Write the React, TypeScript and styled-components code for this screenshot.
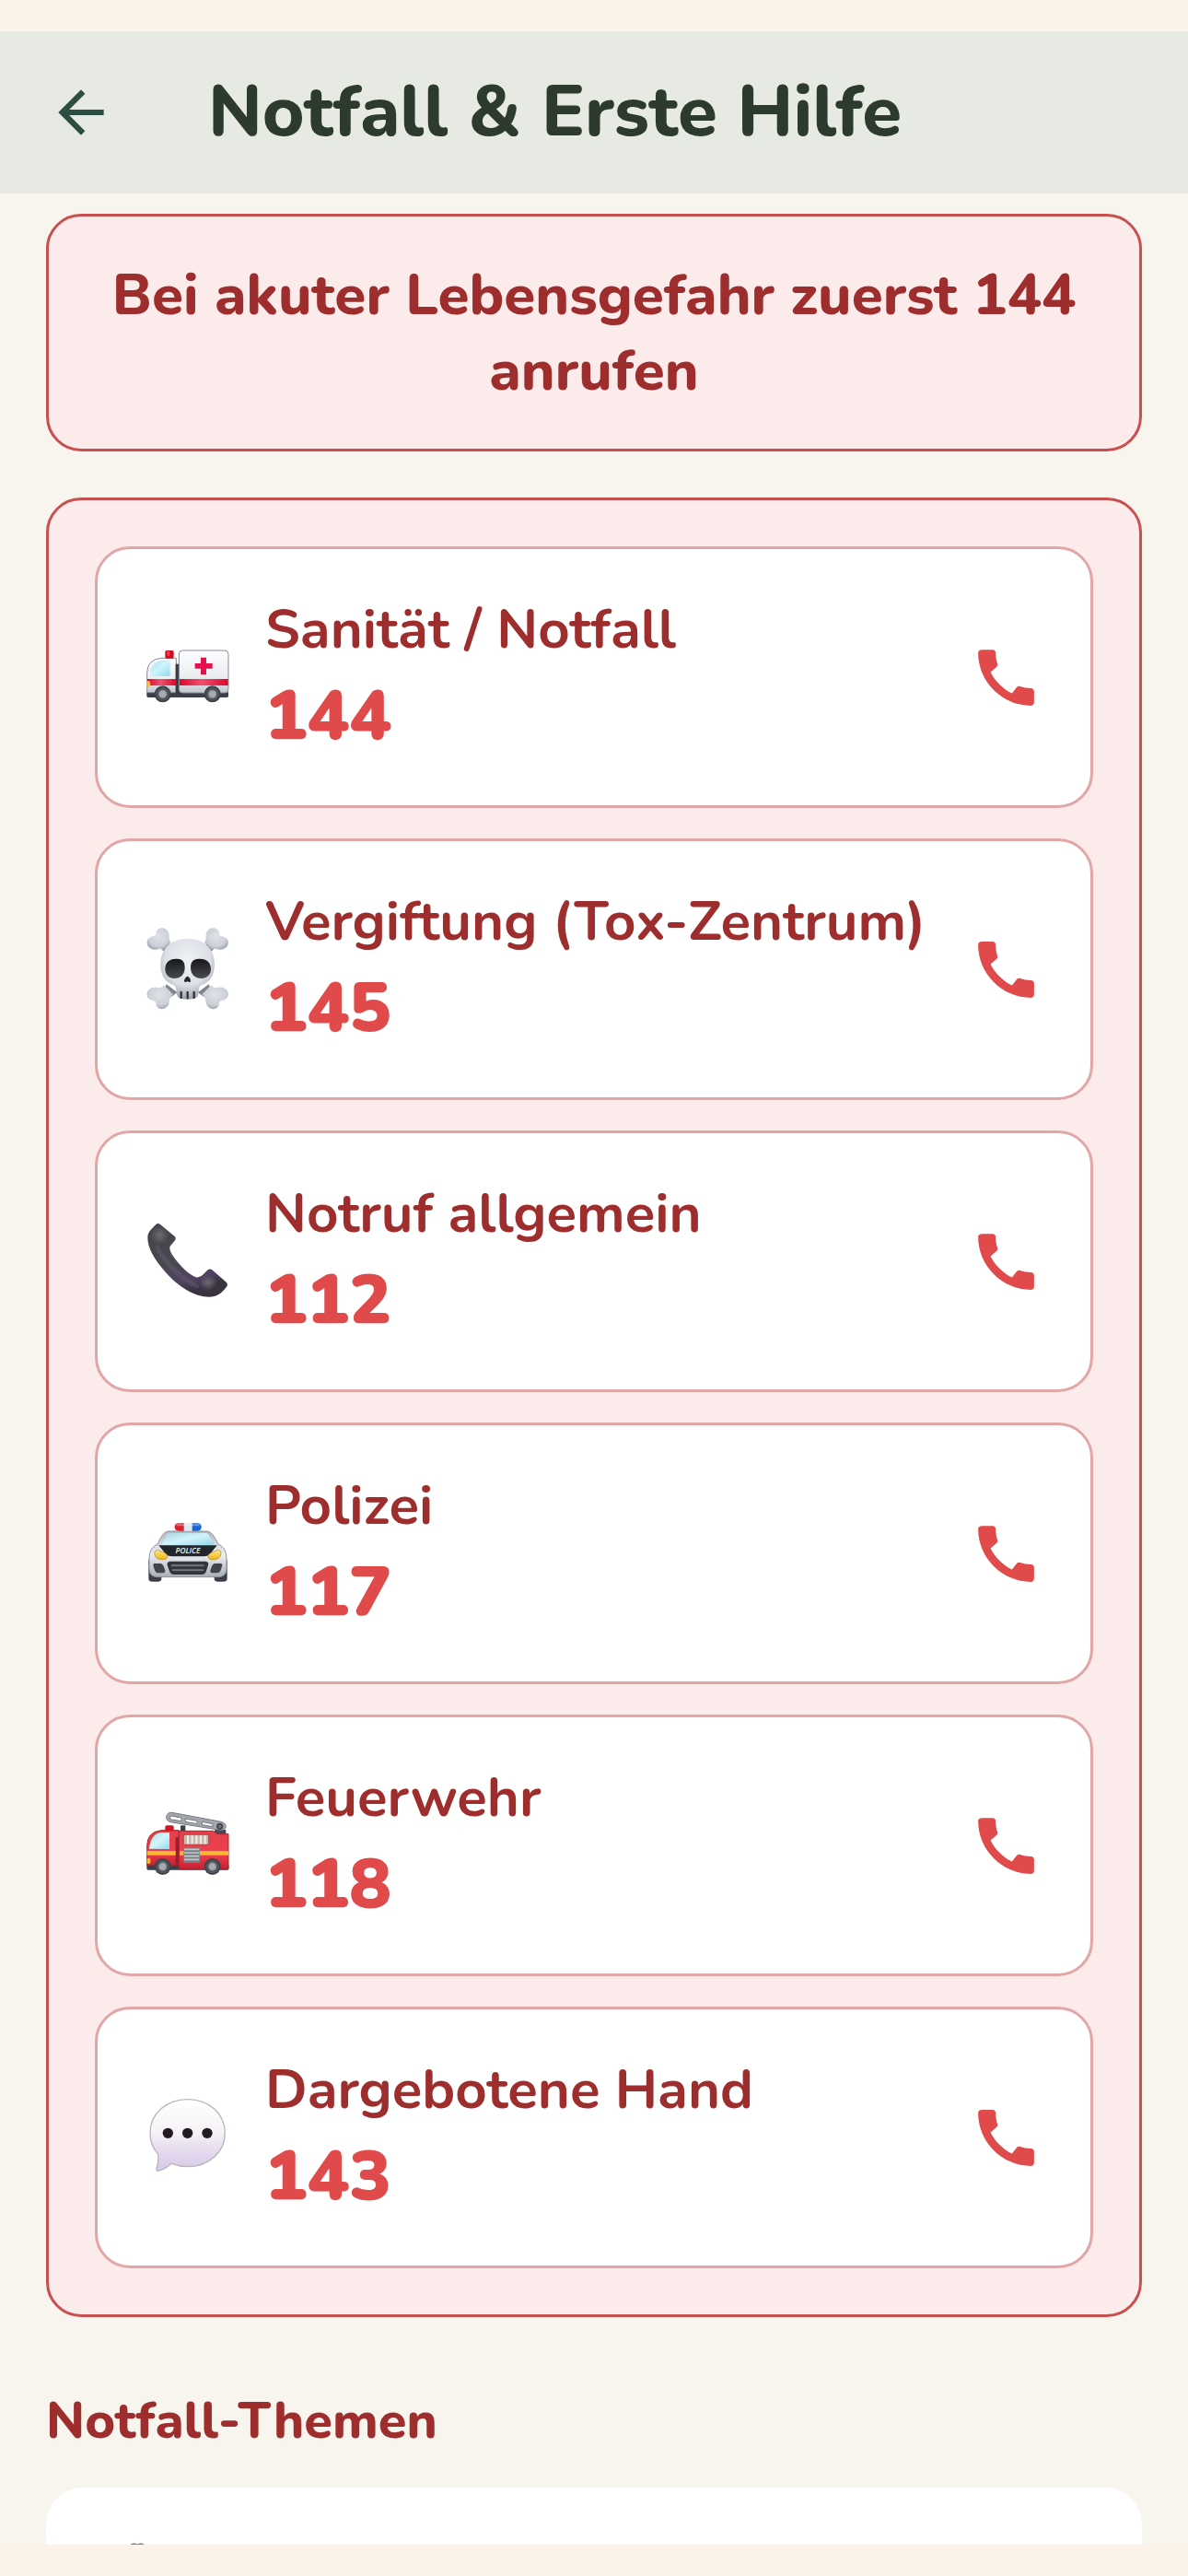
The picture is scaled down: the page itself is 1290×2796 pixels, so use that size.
import React from 'react';
import styled, { createGlobalStyle } from 'styled-components';
import { MdArrowBack, MdCall } from 'react-icons/md';

interface Contact {
    label: string;
    number: string;
    icon: React.ReactNode;
}

interface EmojiProps {
    viewBox: string;
    title: string;
    children: React.ReactNode;
}

const Emoji: React.FC<EmojiProps> = ({ viewBox, title, children }) => (
    <EmojiSvg viewBox={viewBox} role="img" aria-label={title}>
        {children}
    </EmojiSvg>
);

const Wheel: React.FC<{ cx: number; cy: number }> = ({ cx, cy }) => (
    <>
        <circle cx={cx} cy={cy} r="27" fill="#3d4149" />
        <circle cx={cx} cy={cy} r="22" fill="#4f535b" />
        <circle cx={cx} cy={cy} r="14" fill="#8d8f98" />
        <circle cx={cx} cy={cy} r="10" fill="#a9abb3" />
    </>
);

const AmbulanceIcon = () => (
    <Emoji viewBox="51 24 282 282" title="Ambulanz">
        <defs>
            <linearGradient id="ambBody" x1="0" y1="0" x2="0" y2="1">
                <stop offset="0" stopColor="#fdfdfe" />
                <stop offset="0.6" stopColor="#eceef2" />
                <stop offset="1" stopColor="#c3c7ce" />
            </linearGradient>
            <linearGradient id="ambGlass" x1="0" y1="0" x2="1" y2="1">
                <stop offset="0" stopColor="#a9dcec" />
                <stop offset="0.5" stopColor="#cdf4fb" />
                <stop offset="1" stopColor="#8fdcee" />
            </linearGradient>
            <linearGradient id="ambStripe" x1="0" y1="0" x2="1" y2="0">
                <stop offset="0" stopColor="#d9082c" />
                <stop offset="0.45" stopColor="#f0506f" />
                <stop offset="1" stopColor="#d9082c" />
            </linearGradient>
        </defs>
        <path d="M58 214H324V226Q324 231 319 231H63Q58 231 58 226Z" fill="#3a3f4b" />
        <path d="M59 215V150Q60 108 104 103H154V215Z" fill="url(#ambBody)" stroke="#858c95" strokeWidth="3" />
        <path d="M67 158Q72 114 108 110H134V162H72Q66 162 67 158Z" fill="url(#ambGlass)" />
        <rect x="152" y="122" width="13" height="100" fill="#353b47" />
        <rect x="163" y="78" width="161" height="138" rx="12" fill="url(#ambBody)" stroke="#858c95" strokeWidth="3" />
        <rect x="60" y="171" width="94" height="21" fill="url(#ambStripe)" />
        <rect x="165" y="171" width="158" height="21" fill="url(#ambStripe)" />
        <path d="M58 177H66Q71 181 70 191L66 197H58Z" fill="#fbb944" />
        <rect x="118" y="78" width="28" height="26" rx="5" fill="#cf0c20" />
        <rect x="124" y="80" width="9" height="16" rx="3" fill="#ef4250" />
        <path d="M234 101H252V120H272V137H252V157H234V137H215V120H234Z" fill="#e3124f" />
        <Wheel cx={110} cy={220} />
        <Wheel cx={272} cy={220} />
    </Emoji>
);

const SkullIcon = () => (
    <Emoji viewBox="51 45 282 282" title="Totenkopf">
        <defs>
            <radialGradient id="bone" cx="0.5" cy="0.4" r="0.6">
                <stop offset="0" stopColor="#dfe2e7" />
                <stop offset="0.7" stopColor="#cdd1d8" />
                <stop offset="1" stopColor="#a3a9b3" />
            </radialGradient>
            <radialGradient id="skull" cx="0.5" cy="0.35" r="0.65">
                <stop offset="0" stopColor="#f0f2f5" />
                <stop offset="0.65" stopColor="#dcdfe5" />
                <stop offset="1" stopColor="#9ca2ac" />
            </radialGradient>
            <linearGradient id="socket" x1="0" y1="0" x2="0" y2="1">
                <stop offset="0" stopColor="#161719" />
                <stop offset="1" stopColor="#4a4b4e" />
            </linearGradient>
        </defs>
        <path d="M124 98L158 124L138 140L106 122Z" fill="#80868f" />
        <path d="M258 98L224 124L244 140L276 122Z" fill="#80868f" />
        <path d="M122 235L158 262L134 278L112 260Z" fill="#80868f" />
        <path d="M260 235L224 262L248 278L270 260Z" fill="#80868f" />
        <path
            d="M88 71C88 45 124 46 130 69C133 80 128 91 136 98L111 124C104 116 99 121 89 122C63 125 49 98 66 84C74 77 87 81 88 71Z"
            fill="url(#bone)"
        />
        <path
            d="M294 71C294 45 258 46 252 69C249 80 254 91 246 98L271 124C278 116 283 121 293 122C319 125 333 98 316 84C308 77 295 81 294 71Z"
            fill="url(#bone)"
        />
        <path
            d="M88 296C88 322 124 321 130 298C133 287 130 280 144 268L114 238C104 250 99 246 89 245C63 242 49 269 66 283C74 290 87 286 88 296Z"
            fill="url(#bone)"
        />
        <path
            d="M294 296C294 322 258 321 252 298C249 287 252 280 238 268L268 238C278 250 283 246 293 245C319 242 333 269 316 283C308 290 295 286 294 296Z"
            fill="url(#bone)"
        />
        <path
            d="M191 86C137 86 103 119 103 169C103 204 116 227 142 236C153 240 154 248 155 262C156 280 168 284 191 284C214 284 226 280 227 262C228 248 229 240 240 236C266 227 279 204 279 169C279 119 245 86 191 86Z"
            fill="url(#skull)"
        />
        <path d="M118 184C119 160 136 151 157 152C176 153 182 163 182 181C182 204 168 216 148 216C130 216 117 204 118 184Z" fill="url(#socket)" />
        <path d="M267 184C266 160 249 151 228 152C208 153 201 163 201 181C201 204 216 216 236 216C254 216 268 204 267 184Z" fill="url(#socket)" />
        <path d="M191 209C185 210 179 221 180 226C181 229 188 229 191 225C194 229 200 229 201 226C202 221 197 210 191 209Z" fill="#27282b" />
        <path d="M170 261V279M191 261V280M212 261V279" stroke="#333438" strokeWidth="7" strokeLinecap="round" />
    </Emoji>
);

const ReceiverIcon = () => (
    <Emoji viewBox="51 36 282 282" title="Telefonhörer">
        <defs>
            <linearGradient id="receiver" x1="0" y1="0" x2="0.35" y2="1">
                <stop offset="0" stopColor="#42444a" />
                <stop offset="0.55" stopColor="#4a4850" />
                <stop offset="0.85" stopColor="#514262" />
                <stop offset="1" stopColor="#38333f" />
            </linearGradient>
            <radialGradient id="receiverGlow">
                <stop offset="0" stopColor="#77777d" stopOpacity="0.8" />
                <stop offset="1" stopColor="#77777d" stopOpacity="0" />
            </radialGradient>
        </defs>
        <path
            d="M88 57Q94 51 101 56L149 96Q155 102 150 109L134 128C129 140 142 159 161 182C185 210 212 231 226 229Q235 228 242 220L257 205Q264 200 271 205L317 245Q324 252 318 260C302 282 284 293 262 293C213 293 159 258 119 212C80 168 61 131 61 101C61 84 69 76 88 57Z"
            fill="url(#receiver)"
        />
        <ellipse cx="100" cy="92" rx="30" ry="30" fill="url(#receiverGlow)" />
        <ellipse cx="258" cy="247" rx="30" ry="26" fill="url(#receiverGlow)" />
        <path d="M92 132C118 182 170 234 222 258" stroke="#6d6878" strokeOpacity="0.35" strokeWidth="14" strokeLinecap="round" fill="none" />
    </Emoji>
);

const PoliceIcon = () => (
    <Emoji viewBox="51 12 282 282" title="Polizeiauto">
        <defs>
            <linearGradient id="polBody" x1="0" y1="0" x2="0" y2="1">
                <stop offset="0" stopColor="#b4b8bf" />
                <stop offset="0.5" stopColor="#eef0f3" />
                <stop offset="1" stopColor="#a9adb6" />
            </linearGradient>
            <linearGradient id="polGlass" x1="0" y1="0" x2="1" y2="1">
                <stop offset="0" stopColor="#a8d5e2" />
                <stop offset="0.5" stopColor="#d3f3fa" />
                <stop offset="1" stopColor="#94d6ea" />
            </linearGradient>
            <linearGradient id="polLamp" x1="0" y1="0" x2="0" y2="1">
                <stop offset="0" stopColor="#ffe98a" />
                <stop offset="1" stopColor="#edb412" />
            </linearGradient>
            <linearGradient id="polGrille" x1="0" y1="0" x2="0" y2="1">
                <stop offset="0" stopColor="#3a3d45" />
                <stop offset="0.5" stopColor="#85888f" />
                <stop offset="1" stopColor="#3a3d45" />
            </linearGradient>
        </defs>
        <rect x="64" y="170" width="42" height="75" rx="10" fill="#3c3f47" />
        <rect x="278" y="170" width="42" height="75" rx="10" fill="#3c3f47" />
        <path
            d="M130 81H253C268 81 278 97 291 123C309 132 318 146 318 174V204C318 220 308 230 290 230H94C76 230 66 220 66 204V174C66 146 75 132 93 123C105 97 115 81 130 81Z"
            fill="url(#polBody)"
            stroke="#8b9099"
            strokeWidth="3"
        />
        <path d="M134 87H249C258 87 266 100 276 126H107C117 100 125 87 134 87Z" fill="url(#polGlass)" />
        <path d="M97 127H287L266 153Q258 163 244 163H140Q126 163 118 153Z" fill="#22252b" />
        <text x="192" y="153" textAnchor="middle" fontFamily="Open Sans, sans-serif" fontStyle="italic" fontWeight="600" fontSize="25" fill="#f1f2f4">
            POLICE
        </text>
        <path d="M83 152Q84 139 99 144L122 155Q131 168 116 173Q84 176 83 152Z" fill="url(#polLamp)" stroke="#a88524" strokeWidth="2" />
        <path d="M300 152Q299 139 284 144L261 155Q252 168 267 173Q299 176 300 152Z" fill="url(#polLamp)" stroke="#a88524" strokeWidth="2" />
        <path d="M134 179H250Q261 180 258 192L251 213Q247 222 238 222H146Q137 222 133 213L125 192Q123 180 134 179Z" fill="#32353c" />
        <rect x="138" y="188" width="107" height="9" rx="4" fill="url(#polGrille)" />
        <rect x="140" y="203" width="103" height="9" rx="4" fill="url(#polGrille)" />
        <path d="M82 186H104Q111 188 114 197L118 210Q118 217 110 217H95Q87 217 84 208L79 193Q79 187 82 186Z" fill="#41454d" />
        <path d="M301 186H279Q272 188 269 197L265 210Q265 217 273 217H288Q296 217 299 208L304 193Q304 187 301 186Z" fill="#41454d" />
        <path d="M162 55H180V80H162Q149 80 149 67Q149 55 162 55Z" fill="#d8202f" />
        <rect x="179" y="55" width="28" height="25" fill="#dfe7f0" />
        <path d="M206 55H223Q236 55 236 67Q236 80 223 80H206Z" fill="#1767d8" />
        <path d="M157 61H228" stroke="#ffffff" strokeOpacity="0.35" strokeWidth="6" strokeLinecap="round" />
    </Emoji>
);

const FireTruckIcon = () => (
    <Emoji viewBox="51 18 282 282" title="Feuerwehrauto">
        <defs>
            <linearGradient id="fireBody" x1="0" y1="0" x2="0" y2="1">
                <stop offset="0" stopColor="#e3414a" />
                <stop offset="0.6" stopColor="#ee3f4c" />
                <stop offset="1" stopColor="#c71f33" />
            </linearGradient>
            <linearGradient id="fireGlass" x1="0" y1="0" x2="1" y2="1">
                <stop offset="0" stopColor="#a9dcec" />
                <stop offset="0.5" stopColor="#d2f5fb" />
                <stop offset="1" stopColor="#8fdcee" />
            </linearGradient>
        </defs>
        <rect x="168" y="94" width="16" height="24" fill="#3c3f47" />
        <path d="M280 108H316V126H276Z" fill="#474a52" />
        <path d="M58 222H325V234Q325 239 320 239H63Q58 239 58 234Z" fill="#3a3f4b" />
        <path d="M59 224V160Q60 115 104 110H163V224Z" fill="url(#fireBody)" stroke="#a52430" strokeWidth="3" />
        <path d="M66 170Q71 121 106 117H132V171Z" fill="url(#fireGlass)" />
        <rect x="152" y="132" width="12" height="92" fill="#97202c" />
        <path d="M163 112H275L288 122H324V236H163Z" fill="url(#fireBody)" stroke="#a52430" strokeWidth="3" />
        <rect x="59" y="177" width="93" height="14" fill="#fcb733" />
        <rect x="165" y="177" width="159" height="14" fill="#fcb733" />
        <rect x="59" y="200" width="11" height="18" rx="3" fill="#fcb733" />
        <rect x="118" y="94" width="28" height="18" rx="5" fill="#cf1526" />
        <rect x="178" y="124" width="82" height="33" rx="5" fill="#c7b9b0" stroke="#9b2a33" strokeWidth="2" />
        <path d="M192 127V154M206 127V154M220 127V154M234 127V154M248 127V154" stroke="#f2ebe3" strokeWidth="6" />
        <rect x="178" y="167" width="53" height="49" fill="#7b8087" />
        <path d="M180 172H229M180 183H229M180 194H229M180 205H229" stroke="#c4c8cd" strokeWidth="5" />
        <path
            d="M140 52L300 82C312 85 318 93 315 101C312 109 302 111 291 108L135 83C125 80 121 73 122 65C124 55 131 51 140 52Z"
            fill="#a4a8ae"
            stroke="#777b82"
            strokeWidth="3"
        />
        <path
            d="M139 63L171 69V80L139 75Q133 74 133 69Q134 63 139 63ZM184 72L222 79V89L184 82ZM238 82L272 89L273 98L238 92Z"
            fill="#ffffff"
            stroke="#73777e"
            strokeWidth="3"
            strokeLinejoin="round"
        />
        <circle cx="296" cy="97" r="11" fill="#44474e" />
        <circle cx="296" cy="97" r="5" fill="#777a80" />
        <Wheel cx={110} cy={228} />
        <Wheel cx={272} cy={228} />
    </Emoji>
);

const BubbleIcon = () => (
    <Emoji viewBox="51 39 282 282" title="Sprechblase">
        <defs>
            <linearGradient id="bubble" x1="0" y1="0" x2="0" y2="1">
                <stop offset="0" stopColor="#ffffff" />
                <stop offset="0.45" stopColor="#f6f3f6" />
                <stop offset="0.8" stopColor="#e0d3ec" />
                <stop offset="1" stopColor="#d9cbe4" />
            </linearGradient>
        </defs>
        <path
            d="M191 56C260 56 313 103 313 165C313 228 260 275 191 275C171 275 154 271 138 265C125 277 110 287 95 289C90 289 89 286 90 281C95 266 97 250 95 234C78 216 69 191 69 165C69 103 122 56 191 56Z"
            fill="url(#bubble)"
            stroke="#b9b4bc"
            strokeWidth="4"
        />
        <circle cx="127" cy="166" r="17" fill="#231a24" />
        <circle cx="191" cy="166" r="17" fill="#231a24" />
        <circle cx="255" cy="166" r="17" fill="#231a24" />
    </Emoji>
);

const contacts: Contact[] = [
    { label: 'Sanität / Notfall', number: '144', icon: <AmbulanceIcon /> },
    { label: 'Vergiftung (Tox-Zentrum)', number: '145', icon: <SkullIcon /> },
    { label: 'Notruf allgemein', number: '112', icon: <ReceiverIcon /> },
    { label: 'Polizei', number: '117', icon: <PoliceIcon /> },
    { label: 'Feuerwehr', number: '118', icon: <FireTruckIcon /> },
    { label: 'Dargebotene Hand', number: '143', icon: <BubbleIcon /> },
];

const ContactCard: React.FC<Contact> = ({ label, number, icon }) => (
    <CardLink href={`tel:${number}`}>
        {icon}
        <CardText>
            <CardLabel>{label}</CardLabel>
            <CardNumber>{number}</CardNumber>
        </CardText>
        <CallIcon aria-hidden="true" />
    </CardLink>
);

const App: React.FC = () => {
    return (
        <>
            <GlobalStyle />
            <Screen>
                <Header>
                    <BackButton type="button" aria-label="Zurück">
                        <MdArrowBack />
                    </BackButton>
                    <Title>Notfall & Erste Hilfe</Title>
                </Header>
                <Content>
                    <Warning>Bei akuter Lebensgefahr zuerst 144 anrufen</Warning>
                    <ContactPanel>
                        {contacts.map((contact) => (
                            <ContactCard key={contact.number} {...contact} />
                        ))}
                    </ContactPanel>
                    <SectionTitle>Notfall-Themen</SectionTitle>
                    <TopicCard>
                        <TopicIcon viewBox="0 0 90 90" aria-hidden="true">
                            <path d="M41 3Q45 0 48 2L50 2Q54 0 57 3V60H41Z" fill="#8d8785" />
                        </TopicIcon>
                    </TopicCard>
                </Content>
            </Screen>
        </>
    );
};

export default App;

const GlobalStyle = createGlobalStyle`
    * {
        box-sizing: border-box;
    }

    body {
        margin: 0;
        background: #fbf2e9;
        font-family: 'Nunito', 'Open Sans', sans-serif;
        font-variant-ligatures: none;
    }
`;

const Screen = styled.div`
    display: flex;
    flex-direction: column;
    height: 100vh;
    padding: 34px 0;
`;

const Header = styled.header`
    display: flex;
    align-items: center;
    gap: 101px;
    flex: none;
    height: 176px;
    padding: 0 51px;
    background: #e6eae2;
`;

const BackButton = styled.button`
    display: flex;
    padding: 0;
    border: none;
    background: none;
    color: #2b4d42;
    font-size: 74px;
    cursor: pointer;
`;

const Title = styled.h1`
    margin: 0;
    color: #2d3b2f;
    font-size: 78px;
    font-weight: 800;
    line-height: 104px;
`;

const Content = styled.main`
    display: flex;
    flex-direction: column;
    flex: 1;
    min-height: 0;
    padding: 22px 50px 0;
    overflow: hidden;
    background: #f8f5ee;

    > * {
        flex: none;
    }
`;

const Warning = styled.p`
    margin: 0 0 50px;
    padding: 45px 50px 43px;
    border: 3px solid #c94f4f;
    border-radius: 38px;
    background: #fbebea;
    color: #9e2d2d;
    font-size: 62px;
    font-weight: 800;
    line-height: 82px;
    text-align: center;
`;

const ContactPanel = styled.section`
    display: flex;
    flex-direction: column;
    gap: 33px;
    padding: 50px;
    border: 3px solid #c94f4f;
    border-radius: 38px;
    background: #fbebea;
`;

const CardLink = styled.a`
    display: flex;
    align-items: center;
    padding: 45px 51px;
    border: 3px solid #e3a6a6;
    border-radius: 38px;
    background: #ffffff;
    text-decoration: none;
`;

const EmojiSvg = styled.svg`
    flex: none;
    width: 94px;
    height: 94px;
`;

const CardText = styled.span`
    display: flex;
    flex-direction: column;
    flex: 1;
    margin-left: 37px;
    white-space: nowrap;
`;

const CardLabel = styled.span`
    color: #9e2d2d;
    font-size: 60px;
    font-weight: 700;
    line-height: 84px;
`;

const CardNumber = styled.span`
    color: #e04a4a;
    font-size: 76px;
    font-weight: 900;
    line-height: 104px;
`;

const CallIcon = styled(MdCall)`
    flex: none;
    color: #e04a4a;
    font-size: 81px;
`;

const SectionTitle = styled.h2`
    margin: 75px 0 34px;
    color: #9e2d2d;
    font-size: 56px;
    font-weight: 800;
    line-height: 76px;
`;

const TopicCard = styled.div`
    height: 284px;
    padding: 59px 50px;
    border-radius: 40px;
    background: #ffffff;
`;

const TopicIcon = styled.svg`
    width: 90px;
    height: 90px;
`;
